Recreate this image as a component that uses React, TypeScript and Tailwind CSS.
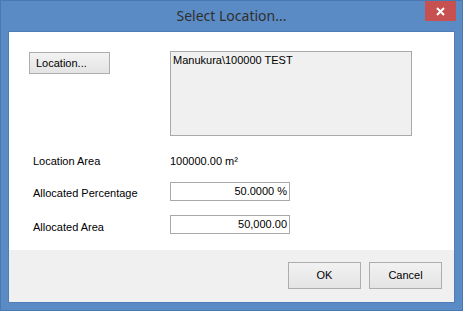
export default function App() {
  return (
    <div className="w-[463px] h-[311px] bg-[#5b8bc5] border border-[#4a78b0] flex flex-col px-[7px] pb-[7px] font-['Liberation_Sans',Arial,sans-serif] text-[11px] text-black">
      {/* Title bar */}
      <div className="h-[30px] grid grid-cols-[1fr_auto_1fr] items-start">
        <div />
        <div className="pt-[5px] text-[14px] leading-[20px] text-[#2f2f2f] font-['Noto_Sans',sans-serif]">
          Select Location...
        </div>
        <div className="flex justify-end mr-[-1px]">
          <div className="w-[31px] h-[20px] bg-[#c75050] flex items-center justify-center">
            <svg width="9" height="9" viewBox="0 0 9 9">
              <path d="M1 1 L8 8 M8 1 L1 8" stroke="white" strokeWidth="2" />
            </svg>
          </div>
        </div>
      </div>

      {/* Client area */}
      <div className="flex-1 flex flex-col bg-white border border-[#4e7db8]">
        <div className="flex-1 pl-[20px] pt-[19px] flex flex-col">
          <div className="flex">
            <button className="mt-[1px] w-[81px] h-[22px] border border-[#adadad] bg-gradient-to-b from-[#f2f2f2] to-[#e4e4e4] text-left pl-[6px] leading-[20px]">
              Location...
            </button>
            <div className="ml-[60px] w-[242px] h-[85px] bg-[#f0f0f0] border border-[#a9a9a9] px-[2px] pt-[2px] leading-[13px]">
              Manukura\100000 TEST
            </div>
          </div>

          <div className="flex items-center mt-[16px] h-[18px]">
            <div className="w-[141px] pl-[4px]">Location Area</div>
            <div>100000.00 m²</div>
          </div>

          <div className="flex items-start mt-[12px]">
            <div className="w-[141px] pl-[4px] mt-[5px] leading-[13px]">Allocated Percentage</div>
            <div className="w-[120px] h-[19px] border border-[#a9a9a9] text-right pr-[2px] leading-[16px]">
              50.0000 %
            </div>
          </div>

          <div className="flex items-start mt-[14px]">
            <div className="w-[141px] pl-[4px] mt-[6px] leading-[13px]">Allocated Area</div>
            <div className="w-[120px] h-[19px] border border-[#a9a9a9] text-right pr-[2px] leading-[16px]">
              50,000.00
            </div>
          </div>
        </div>

        {/* Footer */}
        <div className="h-[52px] bg-[#f0f0f0] flex justify-end items-start pt-[12px] pr-[12px] gap-[8px]">
          <button className="w-[73px] h-[27px] border border-[#adadad] bg-gradient-to-b from-[#f2f2f2] to-[#e4e4e4]">
            OK
          </button>
          <button className="w-[73px] h-[27px] border border-[#adadad] bg-gradient-to-b from-[#f2f2f2] to-[#e4e4e4]">
            Cancel
          </button>
        </div>
      </div>
    </div>
  );
}
